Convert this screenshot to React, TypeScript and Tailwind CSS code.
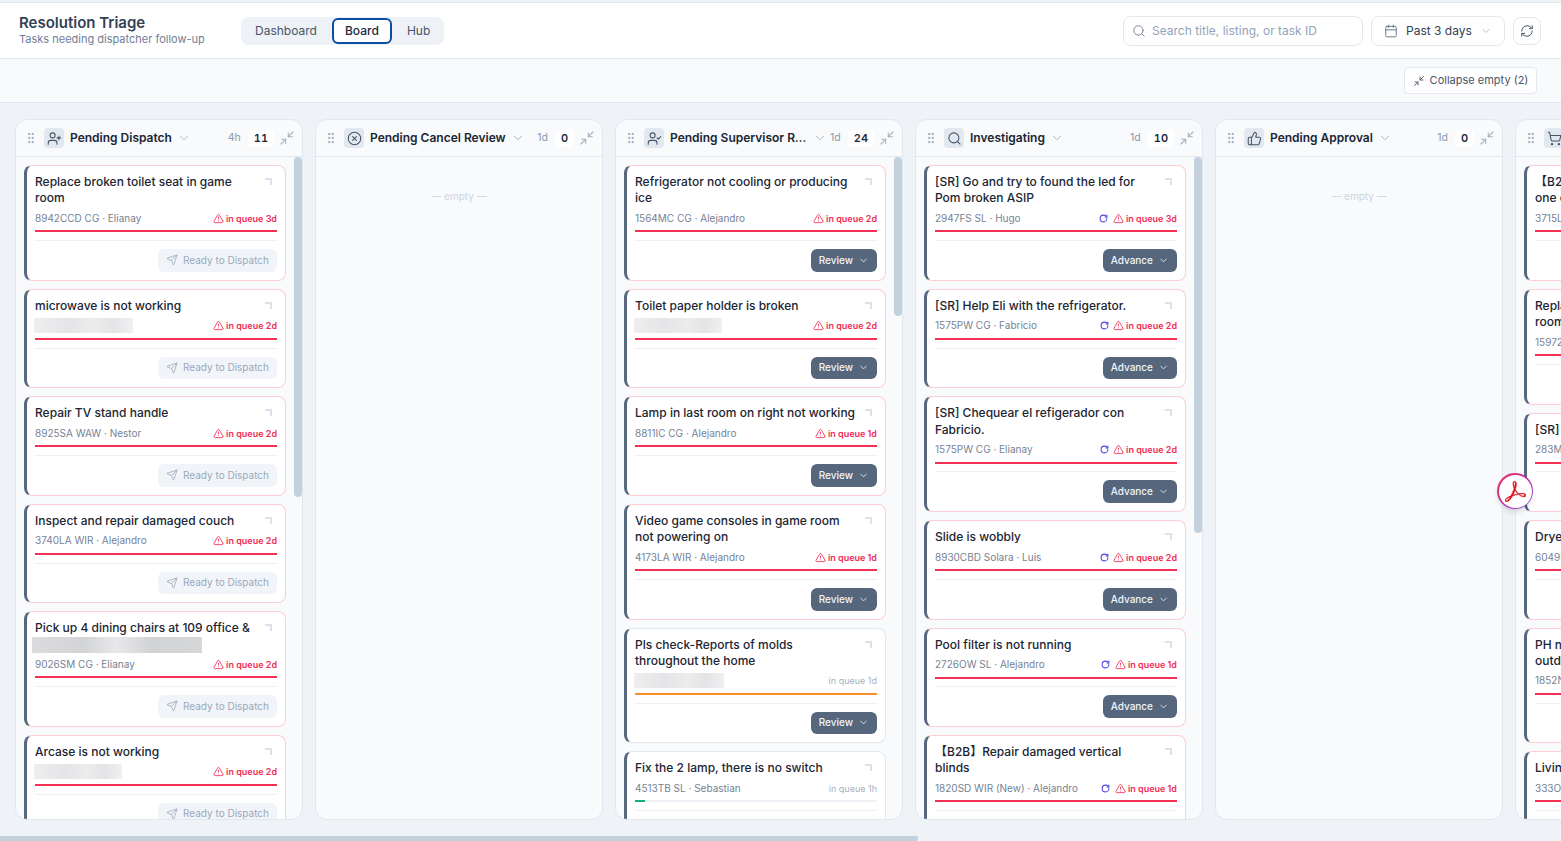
import { AlertTriangle, Calendar, ChevronDown, CircleX, GripVertical, Minimize2, RefreshCw, RotateCw, Search, Send, ShoppingCart, ThumbsUp, UserCheck, UserPlus } from "lucide-react";
import { SiAdobeacrobatreader } from "react-icons/si";
import type { ReactNode } from "react";

type Card = {
  title: string;
  meta?: string;
  blurW?: number;
  second?: boolean;
  queue: string;
  tone?: "red" | "orange" | "green";
  spin?: boolean;
};

const blurClass = "h-[15px] bg-[linear-gradient(90deg,#eeeeef,#e4e5e7_35%,#ececed_60%,#e3e4e6_80%,#f0f0f1)]";

function CardView({ card, action, muted }: { card: Card; action: string; muted?: boolean }) {
  const tone = card.tone ?? "red";
  return (
    <div className={`shrink-0 rounded-lg border border-l-[3px] bg-white pt-2 pr-2 pb-2 pl-2 ${tone === "red" ? "border-[#fecdd3] border-l-[#56677e]" : "border-[#e2e8f0] border-l-[#56677e]"}`}>
      <div className="flex gap-2">
        <div className="w-[222px] shrink-0 text-[12px] leading-[16.25px] font-medium text-[#1b2533]">
          {card.title}
          {card.second && <div className="-ml-[3px] h-4 w-[170px] bg-[linear-gradient(90deg,#dcdcde,#d3d4d6_30%,#e8e8ea_50%,#d2d3d5_70%,#d6d7d9)]" />}
        </div>
        <span className="mt-1 h-[7px] w-[7px] shrink-0 border-t-2 border-r-2 border-[#dbe2ea]" />
      </div>
      <div className="mt-1 flex h-[15.75px] items-center justify-between text-[10px] text-[#778294]">
        {card.meta ? <span className="whitespace-nowrap">{card.meta}</span> : <span className={`-ml-px ${blurClass}`} style={{ width: card.blurW ?? 99 }} />}
        <span className="flex items-center whitespace-nowrap">
          {card.spin && <RotateCw className="mr-[4.5px] h-[9px] w-[9px] text-[#4f46e5]" strokeWidth={2.8} />}
          {tone === "red" ? (
            <span className="flex items-center gap-0.5 text-[9px] leading-none font-semibold text-[#f12b55]">
              <AlertTriangle className="h-[11px] w-[11px]" strokeWidth={1.8} />
              {card.queue}
            </span>
          ) : (
            <span className="text-[9px] leading-none text-[#a6b2c2]">{card.queue}</span>
          )}
        </span>
      </div>
      <div className={`mt-1 h-0.5 ${tone === "green" ? "bg-[#eef2f6]" : tone === "orange" ? "bg-[#f68f2b]" : "bg-[#f62f55]"}`}>
        {tone === "green" && <div className="h-0.5 w-[10px] bg-[#10b07f]" />}
      </div>
      <div className="mt-[7.75px] flex justify-end border-t border-[#eef2f6] pt-2">
        {muted ? (
          <span className="flex h-[22.75px] items-center gap-[5px] rounded-md bg-[#f1f5f9] px-2 text-[10px] text-[#9aa8ba]">
            <Send className="h-3 w-3" strokeWidth={1.6} />
            {action}
          </span>
        ) : (
          <span className="flex h-[22.75px] items-center gap-[5px] rounded-md bg-[#56667c] px-2 text-[10px] font-medium text-[#f1f5f9]">
            {action}
            <ChevronDown className="h-[11px] w-[11px]" strokeWidth={1.8} />
          </span>
        )}
      </div>
    </div>
  );
}

function Column({ icon, title, time, count, cards, action, muted, thumb, narrow }: { icon: ReactNode; title: string; time: string; count: number; cards: Card[]; action?: string; muted?: boolean; thumb?: number; narrow?: boolean }) {
  return (
    <section className="flex h-full w-[288px] shrink-0 flex-col overflow-hidden rounded-xl border border-[#e2e8f0] bg-[#f8fafc]">
      <header className="flex h-[37px] shrink-0 items-center border-b border-[#e2e8f0] pr-[7px] pl-2">
        <GripVertical className="h-3.5 w-3.5 shrink-0 text-[#a3b1c2]" strokeWidth={2} />
        <span className="ml-1.5 flex h-5 w-5 shrink-0 items-center justify-center rounded bg-[#e2e8f0] text-[#475569]">{icon}</span>
        <span className={`ml-1.5 truncate text-[12px] font-semibold text-[#1b2533] ${narrow ? "w-[138px] shrink-0" : ""}`}>{title}</span>
        <ChevronDown className="ml-[5px] h-3.5 w-3.5 shrink-0 text-[#a3b1c2]" strokeWidth={1.6} />
        <span className="ml-auto text-[10.5px] text-[#8a99ac]">{time}</span>
        <span className="ml-[7px] flex h-[17px] items-center justify-center rounded bg-white px-1.5 text-[11px] font-semibold text-[#1e293b] tabular-nums">{count}</span>
        <Minimize2 className="ml-[5px] h-4 w-4 shrink-0 text-[#a3b1c2]" strokeWidth={1.6} />
      </header>
      <div className="flex min-h-0 flex-1">
        <div className={`flex min-w-0 flex-1 flex-col gap-2 overflow-hidden pt-2 pl-2 ${cards.length === 0 ? "pr-2" : ""}`}>
          {cards.length === 0 ? (
            <div className="pt-6 text-center text-[10px] text-[#ccd5e0]">— empty —</div>
          ) : (
            cards.map((c) => <CardView key={c.title} card={c} action={action ?? ""} muted={muted} />)
          )}
        </div>
        {thumb ? (
          <div className="ml-2 w-2 shrink-0">
            <div className="w-2 rounded-full bg-[#c3d0dd]" style={{ height: thumb }} />
          </div>
        ) : cards.length === 0 ? null : (
          <div className="ml-2 w-2 shrink-0" />
        )}
      </div>
    </section>
  );
}

const col1: Card[] = [
  { title: "Replace broken toilet seat in game room", meta: "8942CCD CG · Elianay", queue: "in queue 3d" },
  { title: "microwave is not working", queue: "in queue 2d" },
  { title: "Repair TV stand handle", meta: "8925SA WAW · Nestor", queue: "in queue 2d" },
  { title: "Inspect and repair damaged couch", meta: "3740LA WIR · Alejandro", queue: "in queue 2d" },
  { title: "Pick up 4 dining chairs at 109 office &", second: true, meta: "9026SM CG · Elianay", queue: "in queue 2d" },
  { title: "Arcase is not working", blurW: 88, queue: "in queue 2d" },
];
const col3: Card[] = [
  { title: "Refrigerator not cooling or producing ice", meta: "1564MC CG · Alejandro", queue: "in queue 2d" },
  { title: "Toilet paper holder is broken", blurW: 88, queue: "in queue 2d" },
  { title: "Lamp in last room on right not working", meta: "8811IC CG · Alejandro", queue: "in queue 1d" },
  { title: "Video game consoles in game room not powering on", meta: "4173LA WIR · Alejandro", queue: "in queue 1d" },
  { title: "Pls check-Reports of molds throughout the home", blurW: 90, queue: "in queue 1d", tone: "orange" },
  { title: "Fix the 2 lamp, there is no switch", meta: "4513TB SL · Sebastian", queue: "in queue 1h", tone: "green" },
];
const col4: Card[] = [
  { title: "[SR] Go and try to found the led for Pom broken ASIP", meta: "2947FS SL · Hugo", queue: "in queue 3d", spin: true },
  { title: "[SR] Help Eli with the refrigerator.", meta: "1575PW CG · Fabricio", queue: "in queue 2d", spin: true },
  { title: "[SR] Chequear el refigerador con Fabricio.", meta: "1575PW CG · Elianay", queue: "in queue 2d", spin: true },
  { title: "Slide is wobbly", meta: "8930CBD Solara · Luis", queue: "in queue 2d", spin: true },
  { title: "Pool filter is not running", meta: "2726OW SL · Alejandro", queue: "in queue 1d", spin: true },
  { title: "【B2B】Repair damaged vertical blinds", meta: "1820SD WIR (New) · Alejandro", queue: "in queue 1d", spin: true },
];
const col6: Card[] = [
  { title: "【B2B】Replace broken towel bar in one of the bathrooms", meta: "3715LA WIR · Alejandro", queue: "in queue 1d" },
  { title: "Replace broken ceiling fan in living room", meta: "15972MC CG · Hugo", queue: "in queue 1d" },
  { title: "[SR] Buy new filters", meta: "283MC SL · Luis", queue: "in queue 1d" },
  { title: "Dryer is not working", meta: "6049SA CG · Nestor", queue: "in queue 1d" },
  { title: "PH needs to be checked in the outdoor tub and adjusted", meta: "1852NT SL · Hugo", queue: "in queue 1d" },
  { title: "Living room light is out", meta: "333OW SL · Luis", queue: "in queue 1d" },
];

export default function App() {
  return (
    <div className="relative flex h-[841px] w-full flex-col overflow-hidden border-r border-[#cbd5e1] bg-[#eff3f7] pt-0.5 font-['Inter','Noto_Sans_CJK_SC',sans-serif]">
      <header className="flex h-[57px] shrink-0 items-center border-y border-[#e2e8f0] bg-white pr-5 pl-[19px]">
        <div className="-mt-0.5 w-[222px] shrink-0">
          <h1 className="text-[15px] leading-[18px] font-semibold text-[#334155]">Resolution Triage</h1>
          <p className="text-[11px] leading-[14px] text-[#718096]">Tasks needing dispatcher follow-up</p>
        </div>
        <nav className="flex h-7 items-center rounded-lg bg-[#eef2f6] text-[12px] text-[#475569]">
          <span className="pr-[15px] pl-3.5">Dashboard</span>
          <span className="flex h-[26px] w-[60px] items-center justify-center rounded-md border-2 border-[#0b4ea2] bg-white font-medium text-[#1e293b]">Board</span>
          <span className="pr-3.5 pl-[15px]">Hub</span>
        </nav>
        <div className="ml-auto flex h-[30px] w-[240px] items-center gap-[6px] rounded-lg border border-[#e2e8f0] bg-white px-2 text-[12px] text-[#94a3b8]">
          <Search className="h-3.5 w-3.5 text-[#718096]" strokeWidth={1.6} />
          Search title, listing, or task ID
        </div>
        <div className="ml-2 flex h-[30px] w-[134px] items-center rounded-lg border border-[#e2e8f0] bg-white px-3 text-[12px] text-[#334155]">
          <Calendar className="h-3.5 w-3.5 text-[#64748b]" strokeWidth={1.6} />
          <span className="ml-2">Past 3 days</span>
          <ChevronDown className="ml-auto h-3 w-3 text-[#a3b1c2]" strokeWidth={1.6} />
        </div>
        <div className="ml-2 flex h-7 w-7 items-center justify-center rounded-lg border border-[#e2e8f0] bg-white text-[#475569]">
          <RefreshCw className="h-3.5 w-3.5" strokeWidth={1.7} />
        </div>
      </header>
      <div className="flex h-[44px] shrink-0 items-center justify-end border-b border-[#e2e8f0] bg-[#f8fafc] pr-6">
        <div className="flex h-[27px] w-[133px] items-center justify-center gap-[5px] rounded border border-[#e2e8f0] bg-white text-[11px] text-[#475569]">
          <Minimize2 className="h-3 w-3" strokeWidth={1.8} />
          Collapse empty (2)
        </div>
      </div>
      <main className="flex min-h-0 flex-1 gap-3 overflow-hidden pt-4 pb-4 pl-[15px]">
        <Column icon={<UserPlus className="h-[15px] w-[15px]" strokeWidth={1.7} />} title="Pending Dispatch" time="4h" count={11} cards={col1} action="Ready to Dispatch" muted thumb={340} />
        <Column icon={<CircleX className="h-[15px] w-[15px]" strokeWidth={1.7} />} title="Pending Cancel Review" time="1d" count={0} cards={[]} />
        <Column icon={<UserCheck className="h-[15px] w-[15px]" strokeWidth={1.7} />} title="Pending Supervisor Review" time="1d" count={24} cards={col3} action="Review" thumb={159} narrow />
        <Column icon={<Search className="h-[15px] w-[15px]" strokeWidth={1.7} />} title="Investigating" time="1d" count={10} cards={col4} action="Advance" thumb={376} />
        <Column icon={<ThumbsUp className="h-[15px] w-[15px]" strokeWidth={1.7} />} title="Pending Approval" time="1d" count={0} cards={[]} />
        <Column icon={<ShoppingCart className="h-[15px] w-[15px]" strokeWidth={1.7} />} title="Pending Purchase" time="1d" count={9} cards={col6} action="Advance" />
      </main>
      <div className="h-[5px] w-[918px] shrink-0 rounded-r-full bg-[#c3d0dd]" />
      <div className="absolute top-[473px] left-[1497px] flex h-9 w-9 items-center justify-center rounded-full bg-[linear-gradient(135deg,#f43f5e,#c026a0,#7c5ce0)] p-[1.5px] shadow-md">
        <div className="flex h-full w-full items-center justify-center rounded-full bg-white text-[#e0121f]">
          <SiAdobeacrobatreader className="h-[21px] w-[21px] stroke-[#e0121f] stroke-[0.6]" />
        </div>
      </div>
    </div>
  );
}
